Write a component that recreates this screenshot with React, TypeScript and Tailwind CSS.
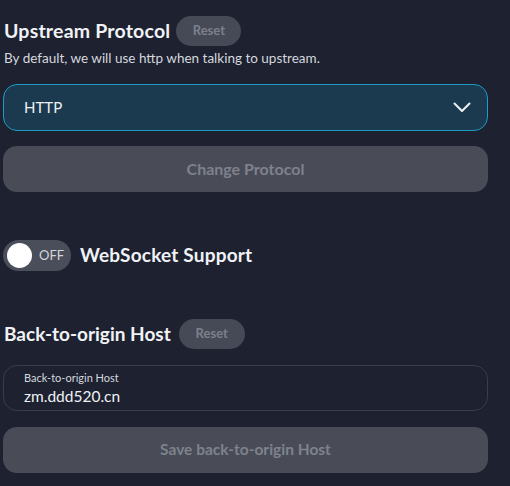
export default function App() {
  return (
    <div
      className="min-h-[486px] w-[510px] bg-[#1d2130] pt-[16px] text-white"
      style={{ fontFamily: 'Lato, "Open Sans", sans-serif' }}
    >
      <div className="ml-[3px] flex w-[485px] flex-col">
        {/* Upstream protocol */}
        <div className="flex h-[30px] items-center">
          <h2 className="ml-[1px] text-[19.5px] font-bold tracking-[0.2px] text-[#f1f2f5]">Upstream Protocol</h2>
          <button className="ml-[6px] h-[30px] w-[65px] rounded-full bg-[#464a56] text-[13px] font-bold text-[#7c808b]">
            Reset
          </button>
        </div>
        <p className="ml-[1px] mt-[3px] text-[13.5px] leading-[18px] text-[#d5d8de]">
          By default, we will use http when talking to upstream.
        </p>

        <div className="mt-[17px] flex h-[47px] items-center justify-between rounded-[14px] border border-[#1c9cc6] bg-[#1b3a50] pl-[20px] pr-[16px]">
          <span className="text-[15px] text-[#eef1f4]">HTTP</span>
          <svg width="18" height="11" viewBox="0 0 18 11" fill="none">
            <path d="M1.5 1.5 L9 9 L16.5 1.5" stroke="#eef1f4" strokeWidth="2" strokeLinecap="round" strokeLinejoin="round" />
          </svg>
        </div>

        <button className="mt-[15px] h-[46px] rounded-[14px] bg-[#494c57] text-[16px] font-bold text-[#7e828c]">
          Change Protocol
        </button>

        {/* WebSocket */}
        <div className="mt-[48px] flex h-[31px] items-center">
          <div className="flex h-[31px] w-[68px] items-center rounded-full bg-[#4a4e5a] pl-[4px]">
            <span className="h-[25px] w-[25px] rounded-full bg-white" />
            <span className="ml-[7px] text-[13px] text-[#d2d5db]">OFF</span>
          </div>
          <span className="ml-[9px] text-[19px] font-bold tracking-[0.2px] text-[#f1f2f5]">WebSocket Support</span>
        </div>

        {/* Back-to-origin */}
        <div className="mt-[48px] flex h-[30px] items-center">
          <h2 className="ml-[1px] text-[19px] font-bold text-[#f1f2f5]">Back-to-origin Host</h2>
          <button className="ml-[8px] h-[30px] w-[66px] rounded-full bg-[#464a56] text-[13px] font-bold text-[#7c808b]">
            Reset
          </button>
        </div>

        <div className="mt-[16px] flex h-[46px] flex-col justify-center rounded-[14px] border border-[#3a3e4b] pl-[20px]">
          <span className="text-[11px] leading-[14px] text-[#d5d8de]">Back-to-origin Host</span>
          <span className="mt-[2px] text-[15.5px] leading-[19px] text-[#eef1f4]">zm.ddd520.cn</span>
        </div>

        <button className="mt-[16px] h-[46px] rounded-[14px] bg-[#494c57] text-[15.5px] font-bold text-[#7e828c]">
          Save back-to-origin Host
        </button>
      </div>
    </div>
  )
}
